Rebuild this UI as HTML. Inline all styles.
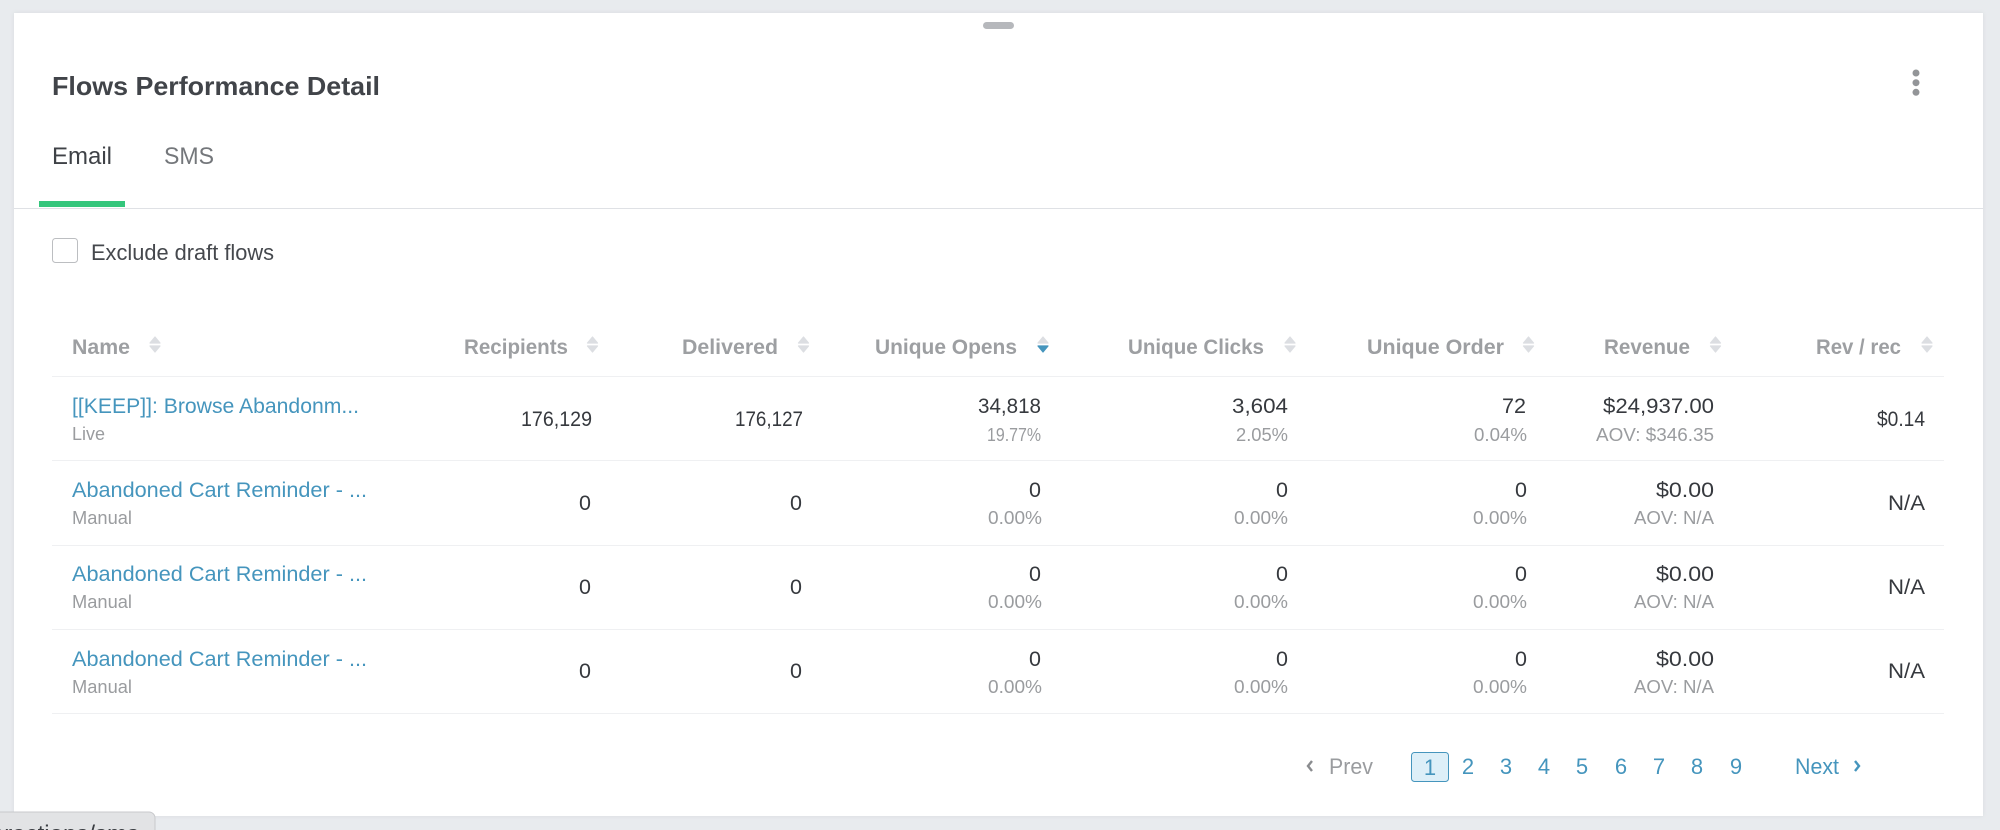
<!DOCTYPE html>
<html><head><meta charset="utf-8"><style>
html,body{margin:0;padding:0;width:2000px;height:830px;overflow:hidden;background:#e8ebee}
svg{display:block;position:absolute;left:0;top:0}
text{font-family:"Liberation Sans",sans-serif}
.h{font-size:21px;font-weight:700;fill:#9d9fa2}
.m{font-size:21.5px;fill:#36393e}
.s{font-size:18px;fill:#9a9c9f}
.n{font-size:21.5px;fill:#4595bd}
.p{font-size:22px;fill:#4595bd}
.t{fill:#dcdee2;stroke:#dcdee2;stroke-width:1.2;stroke-linejoin:round}
</style></head><body>
<svg width="2000" height="830" viewBox="0 0 2000 830">
<defs><filter id="f" x="-2%" y="-2%" width="104%" height="104%"><feDropShadow dx="0" dy="0" stdDeviation="2" flood-color="#d3d6da" flood-opacity="0.8"/></filter></defs>
<rect x="14" y="13" width="1969" height="803" fill="#fff" filter="url(#f)"/>
<rect x="983" y="22" width="31" height="7" rx="3.500" fill="#b6b8bc"/>
<circle cx="1916" cy="73" r="3.500" fill="#939598"/><circle cx="1916" cy="82.700" r="3.500" fill="#939598"/><circle cx="1916" cy="92.300" r="3.500" fill="#939598"/>
<text x="52" y="95" font-size="26" font-weight="700" fill="#414449" textLength="328" lengthAdjust="spacingAndGlyphs">Flows Performance Detail</text>
<text x="52" y="164" font-size="24" fill="#3f4247" textLength="60" lengthAdjust="spacingAndGlyphs">Email</text>
<text x="164" y="164" font-size="24" fill="#74777b" textLength="50" lengthAdjust="spacingAndGlyphs">SMS</text>
<rect x="14" y="208" width="1969" height="1" fill="#dfe1e5"/>
<rect x="39" y="201" width="86" height="6" fill="#34c67c"/>
<rect x="52.500" y="238.500" width="25" height="24" rx="3" fill="#fff" stroke="#bcbec1"/>
<text x="91" y="260" font-size="22" fill="#45484d" textLength="183" lengthAdjust="spacingAndGlyphs">Exclude draft flows</text>

<text class="h" x="72" y="354" textLength="58" lengthAdjust="spacingAndGlyphs">Name</text>
<text class="h" x="464" y="354" textLength="104" lengthAdjust="spacingAndGlyphs">Recipients</text>
<text class="h" x="682" y="354" textLength="96" lengthAdjust="spacingAndGlyphs">Delivered</text>
<text class="h" x="875" y="354" textLength="142" lengthAdjust="spacingAndGlyphs">Unique Opens</text>
<text class="h" x="1128" y="354" textLength="136" lengthAdjust="spacingAndGlyphs">Unique Clicks</text>
<text class="h" x="1367" y="354" textLength="137" lengthAdjust="spacingAndGlyphs">Unique Order</text>
<text class="h" x="1604" y="354" textLength="86" lengthAdjust="spacingAndGlyphs">Revenue</text>
<text class="h" x="1816" y="354" textLength="85" lengthAdjust="spacingAndGlyphs">Rev / rec</text>

<g class="t">
<path d="M155 337l5 6h-10zM155 352l5-6h-10z"/>
<path d="M592.500 337l5 6h-10zM592.500 352l5-6h-10z"/>
<path d="M803.500 337l5 6h-10zM803.500 352l5-6h-10z"/>
<path d="M1043 337l5 6h-10z"/>
<path d="M1290 337l5 6h-10zM1290 352l5-6h-10z"/>
<path d="M1528.500 337l5 6h-10zM1528.500 352l5-6h-10z"/>
<path d="M1715.500 337l5 6h-10zM1715.500 352l5-6h-10z"/>
<path d="M1927 337l5 6h-10zM1927 352l5-6h-10z"/>
</g>
<path d="M1043 352l5-6h-10z" fill="#4595bd" stroke="#4595bd" stroke-width="1.200" stroke-linejoin="round"/>

<g fill="#eff0f2">
<rect x="52" y="376" width="1892" height="1"/>
<rect x="52" y="460" width="1892" height="1"/>
<rect x="52" y="545" width="1892" height="1"/>
<rect x="52" y="629" width="1892" height="1"/>
<rect x="52" y="713" width="1892" height="1"/>
</g>

<!-- Row 1 -->
<text class="n" x="72" y="413" textLength="287" lengthAdjust="spacingAndGlyphs">[[KEEP]]: Browse Abandonm...</text>
<text class="s" x="72" y="440" textLength="33" lengthAdjust="spacingAndGlyphs">Live</text>
<text class="m" x="592" y="426" text-anchor="end" textLength="71" lengthAdjust="spacingAndGlyphs">176,129</text>
<text class="m" x="803" y="426" text-anchor="end" textLength="68" lengthAdjust="spacingAndGlyphs">176,127</text>
<text class="m" x="1041" y="413" text-anchor="end" textLength="63" lengthAdjust="spacingAndGlyphs">34,818</text>
<text class="s" x="1041" y="441" text-anchor="end" textLength="54" lengthAdjust="spacingAndGlyphs">19.77%</text>
<text class="m" x="1288" y="413" text-anchor="end" textLength="56" lengthAdjust="spacingAndGlyphs">3,604</text>
<text class="s" x="1288" y="441" text-anchor="end" textLength="52" lengthAdjust="spacingAndGlyphs">2.05%</text>
<text class="m" x="1526" y="413" text-anchor="end" textLength="24" lengthAdjust="spacingAndGlyphs">72</text>
<text class="s" x="1527" y="441" text-anchor="end" textLength="53" lengthAdjust="spacingAndGlyphs">0.04%</text>
<text class="m" x="1714" y="413" text-anchor="end" textLength="111" lengthAdjust="spacingAndGlyphs">$24,937.00</text>
<text class="s" x="1714" y="441" text-anchor="end" textLength="118" lengthAdjust="spacingAndGlyphs">AOV: $346.35</text>
<text class="m" x="1925" y="426" text-anchor="end" textLength="48" lengthAdjust="spacingAndGlyphs">$0.14</text>

<!-- Row 2 -->
<text class="n" x="72" y="497" textLength="295" lengthAdjust="spacingAndGlyphs">Abandoned Cart Reminder - ...</text>
<text class="s" x="72" y="524" textLength="60" lengthAdjust="spacingAndGlyphs">Manual</text>
<text class="m" x="591" y="510" text-anchor="end">0</text>
<text class="m" x="802" y="510" text-anchor="end">0</text>
<text class="m" x="1041" y="497" text-anchor="end">0</text>
<text class="s" x="1042" y="524" text-anchor="end" textLength="54" lengthAdjust="spacingAndGlyphs">0.00%</text>
<text class="m" x="1288" y="497" text-anchor="end">0</text>
<text class="s" x="1288" y="524" text-anchor="end" textLength="54" lengthAdjust="spacingAndGlyphs">0.00%</text>
<text class="m" x="1527" y="497" text-anchor="end">0</text>
<text class="s" x="1527" y="524" text-anchor="end" textLength="54" lengthAdjust="spacingAndGlyphs">0.00%</text>
<text class="m" x="1714" y="497" text-anchor="end" textLength="58" lengthAdjust="spacingAndGlyphs">$0.00</text>
<text class="s" x="1714" y="524" text-anchor="end" textLength="80" lengthAdjust="spacingAndGlyphs">AOV: N/A</text>
<text class="m" x="1925" y="510" text-anchor="end" textLength="37" lengthAdjust="spacingAndGlyphs">N/A</text>

<!-- Row 3 -->
<text class="n" x="72" y="581" textLength="295" lengthAdjust="spacingAndGlyphs">Abandoned Cart Reminder - ...</text>
<text class="s" x="72" y="608" textLength="60" lengthAdjust="spacingAndGlyphs">Manual</text>
<text class="m" x="591" y="594" text-anchor="end">0</text>
<text class="m" x="802" y="594" text-anchor="end">0</text>
<text class="m" x="1041" y="581" text-anchor="end">0</text>
<text class="s" x="1042" y="608" text-anchor="end" textLength="54" lengthAdjust="spacingAndGlyphs">0.00%</text>
<text class="m" x="1288" y="581" text-anchor="end">0</text>
<text class="s" x="1288" y="608" text-anchor="end" textLength="54" lengthAdjust="spacingAndGlyphs">0.00%</text>
<text class="m" x="1527" y="581" text-anchor="end">0</text>
<text class="s" x="1527" y="608" text-anchor="end" textLength="54" lengthAdjust="spacingAndGlyphs">0.00%</text>
<text class="m" x="1714" y="581" text-anchor="end" textLength="58" lengthAdjust="spacingAndGlyphs">$0.00</text>
<text class="s" x="1714" y="608" text-anchor="end" textLength="80" lengthAdjust="spacingAndGlyphs">AOV: N/A</text>
<text class="m" x="1925" y="594" text-anchor="end" textLength="37" lengthAdjust="spacingAndGlyphs">N/A</text>

<!-- Row 4 -->
<text class="n" x="72" y="666" textLength="295" lengthAdjust="spacingAndGlyphs">Abandoned Cart Reminder - ...</text>
<text class="s" x="72" y="693" textLength="60" lengthAdjust="spacingAndGlyphs">Manual</text>
<text class="m" x="591" y="678" text-anchor="end">0</text>
<text class="m" x="802" y="678" text-anchor="end">0</text>
<text class="m" x="1041" y="666" text-anchor="end">0</text>
<text class="s" x="1042" y="693" text-anchor="end" textLength="54" lengthAdjust="spacingAndGlyphs">0.00%</text>
<text class="m" x="1288" y="666" text-anchor="end">0</text>
<text class="s" x="1288" y="693" text-anchor="end" textLength="54" lengthAdjust="spacingAndGlyphs">0.00%</text>
<text class="m" x="1527" y="666" text-anchor="end">0</text>
<text class="s" x="1527" y="693" text-anchor="end" textLength="54" lengthAdjust="spacingAndGlyphs">0.00%</text>
<text class="m" x="1714" y="666" text-anchor="end" textLength="58" lengthAdjust="spacingAndGlyphs">$0.00</text>
<text class="s" x="1714" y="693" text-anchor="end" textLength="80" lengthAdjust="spacingAndGlyphs">AOV: N/A</text>
<text class="m" x="1925" y="678" text-anchor="end" textLength="37" lengthAdjust="spacingAndGlyphs">N/A</text>

<!-- Pagination -->
<path d="M1312 761l-4 5 4 5" fill="none" stroke="#8a8c8f" stroke-width="2.400"/>
<text x="1329" y="774" font-size="22" fill="#9a9c9f" textLength="44" lengthAdjust="spacingAndGlyphs">Prev</text>
<rect x="1411.500" y="752.500" width="37" height="29" rx="3" fill="#ddeff8" stroke="#4595bd"/>
<text class="p" x="1430" y="775" text-anchor="middle">1</text>
<text class="p" x="1468" y="774" text-anchor="middle">2</text>
<text class="p" x="1506" y="774" text-anchor="middle">3</text>
<text class="p" x="1544" y="774" text-anchor="middle">4</text>
<text class="p" x="1582" y="774" text-anchor="middle">5</text>
<text class="p" x="1621" y="774" text-anchor="middle">6</text>
<text class="p" x="1659" y="774" text-anchor="middle">7</text>
<text class="p" x="1697" y="774" text-anchor="middle">8</text>
<text class="p" x="1736" y="774" text-anchor="middle">9</text>
<text class="p" x="1795" y="774" textLength="44" lengthAdjust="spacingAndGlyphs">Next</text>
<path d="M1855 761l4 5-4 5" fill="none" stroke="#4595bd" stroke-width="2.400"/>

<!-- Status tooltip -->
<path d="M-2 812H149a6 6 0 0 1 6 6V832H-2z" fill="#e2e3e5" stroke="#c8c9cc"/>
<text x="139" y="842" text-anchor="end" font-size="24" fill="#3a3d42">teractions/sms</text>
</svg>
</body></html>
